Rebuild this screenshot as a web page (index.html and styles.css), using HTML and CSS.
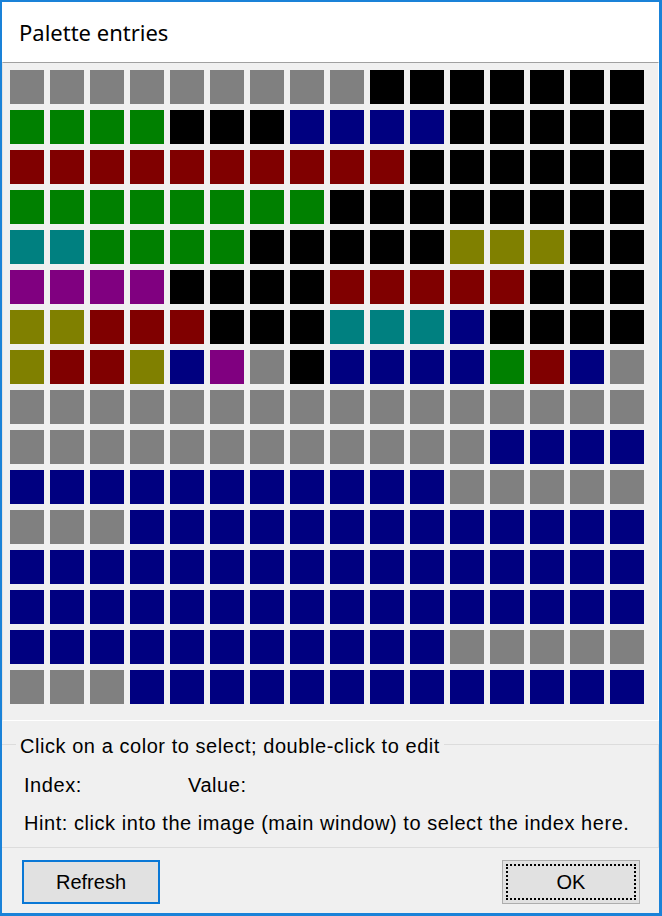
FILE: index.html
```html
<!DOCTYPE html>
<html>
<head>
    <title>Palette entries</title>
    <link rel="stylesheet" href="styles.css">
</head>
<body>
    <div class="window">
        <div class="title">Palette entries</div>

        <!-- 16x16 palette, filled by palette.js -->
        <div class="swatches">
            <div class="swatches-grid" id="grid"></div>
        </div>

        <div class="info">
            <div class="group">
                <div class="legend">Click on a color to select; double-click to edit</div>
                <div class="row">
                    <span class="label">Index:</span>
                    <span>Value:</span>
                </div>
                <div class="row">Hint: click into the image (main window) to select the index here.</div>
            </div>
        </div>

        <div class="footer">
            <button class="btn btn-default">Refresh</button>
            <button class="btn btn-focus"><span class="focus-ring">OK</span></button>
        </div>
    </div>

    <script src="palette.js"></script>
</body>
</html>
```

FILE: styles.css
```css
body {
    margin: 0;
    background: #ffffff;
    font-family: "Liberation Sans", Arial, sans-serif;
    font-size: 20px;
    color: #000000;
}

.window {
    width: 662px;
    height: 916px;
    box-sizing: border-box;
    border: 2px solid #1a82d8;
    border-right-width: 3px;
    border-bottom-width: 3px;
    background: #f0f0f0;
    display: flex;
    flex-direction: column;
}

.title {
    height: 60px;
    flex: none;
    background: #ffffff;
    padding-left: 17px;
    display: flex;
    align-items: center;
    font-family: "Noto Sans", "Open Sans", sans-serif;
    font-size: 22px;
}

.swatches {
    flex: none;
    border-top: 1px solid #a0a0a0;
    border-left: 1px solid #e3e3e3;
    border-bottom: 1px solid #ffffff;
    border-right: 1px solid #ffffff;
    padding: 7px 14px 16px 7px;
}

.swatches-grid {
    display: grid;
    grid-template-columns: repeat(16, 34px);
    grid-auto-rows: 34px;
    gap: 6px;
}

.swatch-a { background: #808080; }
.swatch-k { background: #000000; }
.swatch-g { background: #008000; }
.swatch-n { background: #000080; }
.swatch-m { background: #800000; }
.swatch-t { background: #008080; }
.swatch-o { background: #808000; }
.swatch-p { background: #800080; }

.info {
    padding-top: 23px;
    letter-spacing: 0.55px;
}

.group {
    height: 104px;
    box-sizing: border-box;
    border: 1px solid #dcdcdc;
    border-left: none;
    padding-left: 22px;
}

.legend {
    display: table;
    margin: -10px 0 0 -8px;
    padding: 0 4px;
    line-height: 22px;
    background: #f0f0f0;
}

.row {
    display: flex;
    line-height: 38px;
    white-space: nowrap;
}

.legend + .row {
    margin-top: 9px;
}

.label {
    width: 164px;
}

.footer {
    display: flex;
    justify-content: space-between;
    padding: 12px 19px 0 20px;
}

.btn {
    width: 138px;
    height: 44px;
    box-sizing: border-box;
    background: #e1e1e1;
    font-family: "Liberation Sans", Arial, sans-serif;
    font-size: 20px;
    color: #000000;
    padding: 0;
}

.btn-default {
    border: 2px solid #0a78d6;
}

.btn-focus {
    border: 1px solid #adadad;
    padding: 3px;
}

.focus-ring {
    display: flex;
    align-items: center;
    justify-content: center;
    height: 100%;
    box-sizing: border-box;
    border: 2px dotted #000000;
}
```

FILE: palette.js
```js
// one letter per entry, see .swatch-* in styles.css
var rows = [
    "aaaaaaaaakkkkkkk",
    "ggggkkknnnnkkkkk",
    "mmmmmmmmmmkkkkkk",
    "ggggggggkkkkkkkk",
    "ttggggkkkkkoookk",
    "ppppkkkkmmmmmkkk",
    "oommmkkktttnkkkk",
    "ommonpaknnnngmna",
    "aaaaaaaaaaaaaaaa",
    "aaaaaaaaaaaannnn",
    "nnnnnnnnnnnaaaaa",
    "aaannnnnnnnnnnnn",
    "nnnnnnnnnnnnnnnn",
    "nnnnnnnnnnnnnnnn",
    "nnnnnnnnnnnaaaaa",
    "aaannnnnnnnnnnnn"
];

var grid = document.getElementById('grid');
rows.forEach(function (row) {
    for (var i = 0; i < row.length; i++) {
        var cell = document.createElement('div');
        cell.className = 'swatch swatch-' + row[i];
        grid.appendChild(cell);
    }
});
```
